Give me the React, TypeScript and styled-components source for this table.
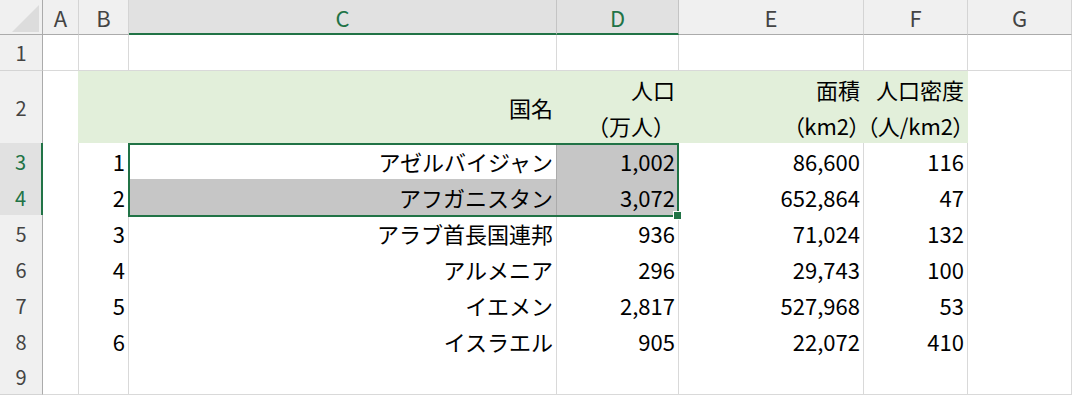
import React from 'react';
import styled, { createGlobalStyle, css } from 'styled-components';

const GREEN = '#217346';
const GRID = '#d9d9d9';
const HEAD_LINE = '#ababab';
const HEAD_SEP = '#d4d4d4';
const FILL_GREEN = '#e2efda';
const FILL_SEL = '#c6c6c6';
const SEL_GRID = '#ababab';

const COLS = '43px 36px 50px 428px 122px 185px 104px 104px';

const Global = createGlobalStyle`
  html, body { margin: 0; padding: 0; background: #fff; }
  body { font-family: "Noto Sans CJK JP", "Noto Sans", sans-serif; }
`;

const Sheet = styled.div`
  position: relative;
  width: 1072px;
  height: 396px;
  overflow: hidden;
  background: #fff;
`;

const Row = styled.div<{ $h: number }>`
  display: grid;
  grid-template-columns: ${COLS};
  height: ${(p) => p.$h}px;
`;

const Corner = styled.div`
  position: relative;
  box-sizing: border-box;
  background: #f0f0f0;
  border-right: 1px solid ${HEAD_LINE};
  border-bottom: 1px solid ${HEAD_LINE};
`;

const CornerTriangle = styled.div`
  position: absolute;
  right: 3px;
  bottom: 2px;
  width: 27px;
  height: 27px;
  background: #dcdcdc;
  clip-path: polygon(100% 0, 100% 100%, 0 100%);
`;

const ColHead = styled.div<{ $sel?: boolean }>`
  box-sizing: border-box;
  display: flex;
  align-items: center;
  justify-content: center;
  background: #f0f0f0;
  color: #444;
  font-size: 22px;
  border-right: 1px solid ${HEAD_SEP};
  border-bottom: 1px solid ${HEAD_LINE};
  ${(p) =>
    p.$sel &&
    css`
      background: #e1e1e1;
      color: ${GREEN};
      border-right-color: #c4c4c4;
      border-bottom: 2px solid ${GREEN};
    `}
`;

const RowHead = styled.div<{ $sel?: boolean }>`
  box-sizing: border-box;
  display: flex;
  align-items: center;
  justify-content: center;
  background: #f0f0f0;
  color: #444;
  font-size: 20px;
  border-right: 1px solid ${HEAD_LINE};
  border-bottom: 1px solid ${HEAD_SEP};
  ${(p) =>
    p.$sel &&
    css`
      background: #e1e1e1;
      color: ${GREEN};
      border-right: 2px solid ${GREEN};
      border-bottom-color: #c4c4c4;
    `}
`;

type Fill = 'none' | 'green' | 'sel' | 'active';

const Cell = styled.div<{ $fill?: Fill; $rightColor?: string }>`
  box-sizing: border-box;
  display: flex;
  flex-direction: column;
  justify-content: center;
  align-items: flex-end;
  padding-right: 3px;
  font-size: 22px;
  line-height: 36px;
  color: #000;
  white-space: nowrap;
  background: #fff;
  border-right: 1px solid ${(p) => p.$rightColor ?? GRID};
  border-bottom: 1px solid ${GRID};
  ${(p) =>
    p.$fill === 'green' &&
    css`
      background: ${FILL_GREEN};
      border-color: ${FILL_GREEN};
    `}
  ${(p) =>
    p.$fill === 'sel' &&
    css`
      background: ${FILL_SEL};
      border-color: ${SEL_GRID};
    `}
  ${(p) =>
    p.$fill === 'active' &&
    css`
      border-bottom-color: ${SEL_GRID};
      border-right-color: ${SEL_GRID};
    `}
`;

const Line = styled.span<{ $tight?: boolean }>`
  display: block;
  ${(p) =>
    p.$tight &&
    css`
      font-feature-settings: 'palt' 1;
    `}
`;

const Selection = styled.div`
  position: absolute;
  left: 128px;
  top: 143px;
  width: 551px;
  height: 74px;
  box-sizing: border-box;
  border: 2px solid ${GREEN};
  pointer-events: none;
`;

const Handle = styled.div`
  position: absolute;
  left: 674px;
  top: 212px;
  width: 7px;
  height: 7px;
  background: ${GREEN};
  box-shadow: 0 0 0 1px #fff;
  pointer-events: none;
`;

const columns = ['A', 'B', 'C', 'D', 'E', 'F', 'G'];
const selectedCols = ['C', 'D'];

type DataRow = [string, string, string, string, string];

const data: DataRow[] = [
  ['1', 'アゼルバイジャン', '1,002', '86,600', '116'],
  ['2', 'アフガニスタン', '3,072', '652,864', '47'],
  ['3', 'アラブ首長国連邦', '936', '71,024', '132'],
  ['4', 'アルメニア', '296', '29,743', '100'],
  ['5', 'イエメン', '2,817', '527,968', '53'],
  ['6', 'イスラエル', '905', '22,072', '410'],
];

export default function App() {
  return (
    <>
      <Global />
      <Sheet>
        <Row $h={35}>
          <Corner>
            <CornerTriangle />
          </Corner>
          {columns.map((c) => (
            <ColHead key={c} $sel={selectedCols.includes(c)}>
              {c}
            </ColHead>
          ))}
        </Row>

        <Row $h={36}>
          <RowHead>1</RowHead>
          {columns.map((c) => (
            <Cell key={c} />
          ))}
        </Row>

        <Row $h={72}>
          <RowHead>2</RowHead>
          <Cell $rightColor={FILL_GREEN} />
          <Cell $fill="green" />
          <Cell $fill="green">
            <Line>国名</Line>
          </Cell>
          <Cell $fill="green">
            <Line>人口</Line>
            <Line>（万人）</Line>
          </Cell>
          <Cell $fill="green">
            <Line>面積</Line>
            <Line $tight>（km2）</Line>
          </Cell>
          <Cell $fill="green">
            <Line>人口密度</Line>
            <Line $tight>（人/km2）</Line>
          </Cell>
          <Cell />
        </Row>

        {data.map((r, i) => {
          const rowNum = i + 3;
          const inSel = rowNum === 3 || rowNum === 4;
          const cFill: Fill = rowNum === 3 ? 'active' : rowNum === 4 ? 'sel' : 'none';
          const dFill: Fill = inSel ? 'sel' : 'none';
          return (
            <Row $h={36} key={rowNum}>
              <RowHead $sel={inSel}>{rowNum}</RowHead>
              <Cell />
              <Cell>{r[0]}</Cell>
              <Cell $fill={cFill}>{r[1]}</Cell>
              <Cell $fill={dFill}>{r[2]}</Cell>
              <Cell>{r[3]}</Cell>
              <Cell>{r[4]}</Cell>
              <Cell />
            </Row>
          );
        })}

        <Row $h={36}>
          <RowHead>9</RowHead>
          {columns.map((c) => (
            <Cell key={c} />
          ))}
        </Row>

        <Selection />
        <Handle />
      </Sheet>
    </>
  );
}
